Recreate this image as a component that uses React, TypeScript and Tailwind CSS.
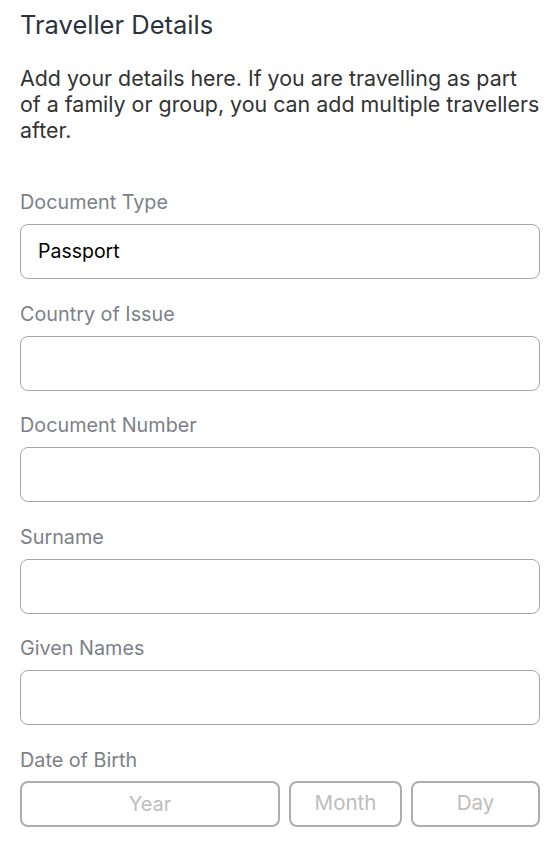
import React from "react"

const fields = ["Document Type", "Country of Issue", "Document Number", "Surname", "Given Names"]

export default function App() {
  return (
    <div className="bg-white pl-5 pr-4 pt-[10px] pb-5 font-['Inter',sans-serif]">
      <h1 className="text-[25.5px] leading-[30px] text-[#2b323d]">Traveller Details</h1>
      <p className="mt-[25px] text-[21.4px] leading-[26px] text-[#333333]">
        Add your details here. If you are travelling as part of a family or group, you can add multiple travellers after.
      </p>

      <div className="mt-[47px]">
        {fields.map((label) => (
          <div key={label} className="mb-[22.5px]">
            <label className="block text-[19.8px] leading-[24px] text-[#7c8189]">{label}</label>
            <div className="mt-[10px] flex h-[55px] items-center rounded-[8px] border border-[#a6a6a6] px-[17px] text-[19.5px] text-black">
              {label === "Document Type" ? "Passport" : ""}
            </div>
          </div>
        ))}

        <label className="block text-[19.8px] leading-[24px] text-[#7c8189]">Date of Birth</label>
        <div className="mt-[9px] flex gap-[9px]">
          <div className="flex h-[46px] w-[260px] items-center justify-center rounded-[8px] border-2 border-[#adadad] text-[20px] text-[#bdbdbd]">Year</div>
          <div className="flex h-[46px] w-[113px] items-center justify-center rounded-[8px] border-2 border-[#adadad] text-[20.5px] text-[#bdbdbd]">Month</div>
          <div className="flex h-[46px] flex-1 items-center justify-center rounded-[8px] border-2 border-[#adadad] text-[20.5px] text-[#bdbdbd]">Day</div>
        </div>
      </div>
    </div>
  )
}
